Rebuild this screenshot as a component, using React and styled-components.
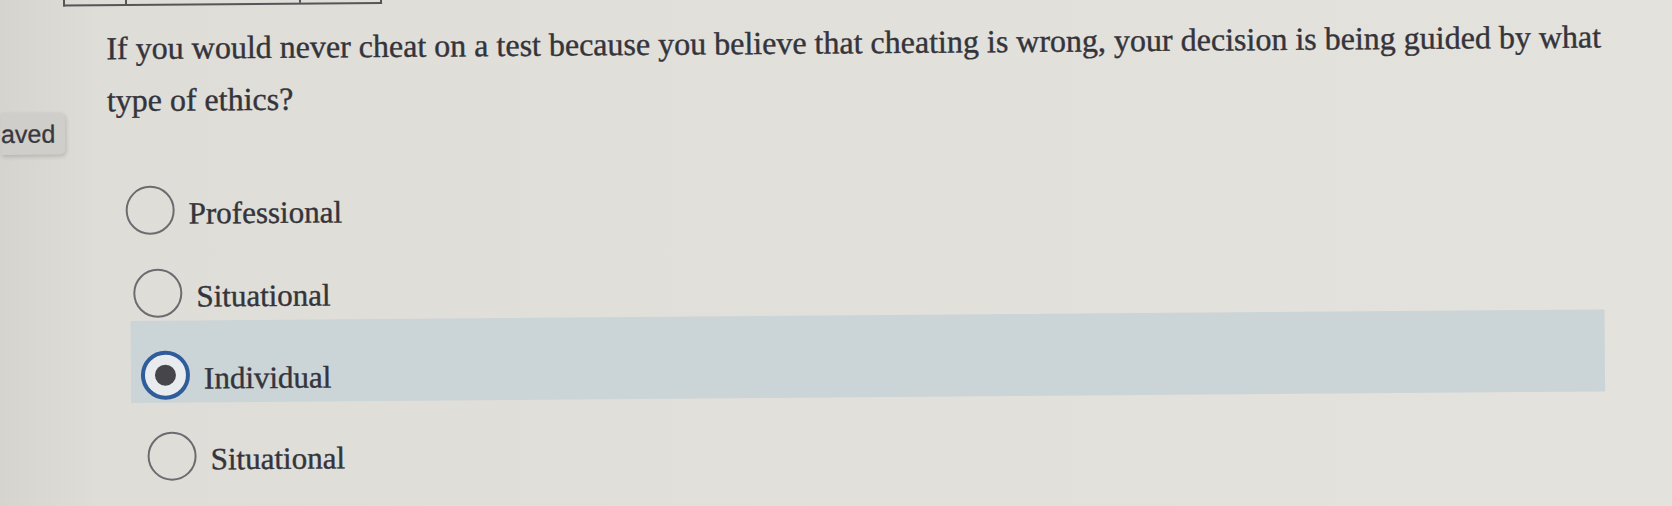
import styled, { createGlobalStyle } from "styled-components";

const GlobalStyle = createGlobalStyle`
  html, body {
    margin: 0;
    padding: 0;
  }
  body {
    background: linear-gradient(90deg, #d6d4cf 0%, #dfddd8 6%, #e2e0db 50%, #e4e2dd 100%);
    overflow: hidden;
  }
`;

const options = [
  { label: "Professional", indent: 18 },
  { label: "Situational", indent: 25 },
  { label: "Individual", indent: 32, selected: true },
  { label: "Situational", indent: 38 },
];

export default function App() {
  return (
    <Page>
      <GlobalStyle />
      <Tilt>
        <Tabs>
          <Tab $w={60} />
          <Tab $w={172} />
          <Tab $w={79} $last />
        </Tabs>
        <Body>
          <Side>
            <SavedBadge>aved</SavedBadge>
          </Side>
          <Content>
            <Question>
              If you would never cheat on a test because you believe that
              cheating is wrong, your decision is being guided by what type of
              ethics?
            </Question>
            <Options>
              {options.map((o, i) => (
                <Option key={i} $selected={o.selected} $indent={o.indent}>
                  <Radio $checked={o.selected}>{o.selected && <Dot />}</Radio>
                  <Label>{o.label}</Label>
                </Option>
              ))}
            </Options>
          </Content>
        </Body>
      </Tilt>
    </Page>
  );
}

const Page = styled.div`
  width: 1672px;
  height: 506px;
  overflow: hidden;
`;

const Tilt = styled.div`
  transform: rotate(-0.45deg);
  transform-origin: 0 0;
`;

/* bottom edge of the table cut off at the top of the photo */
const Tabs = styled.div`
  display: flex;
  margin-left: 63px;
  height: 5px;
  border: 2px solid #55555a;
  border-top: none;
  width: max-content;
`;

const Tab = styled.div`
  width: ${(p) => p.$w}px;
  border-right: ${(p) => (p.$last ? "none" : "2px solid #55555a")};
`;

const Body = styled.div`
  display: grid;
  grid-template-columns: 106px 1fr;
`;

const Side = styled.div`
  padding-top: 106px;
`;

const SavedBadge = styled.div`
  width: 64px;
  height: 42px;
  box-sizing: border-box;
  padding-right: 14px;
  text-align: right;
  background: #cfceca;
  border-radius: 0 5px 5px 0;
  box-shadow: 1px 2px 4px rgba(0, 0, 0, 0.16);
  font-family: "Liberation Sans", Arial, sans-serif;
  font-size: 25px;
  line-height: 42px;
  color: #38383e;
  -webkit-text-stroke: 0.3px #38383e;
`;

const Content = styled.div`
  padding-top: 16px;
`;

const Question = styled.p`
  margin: 0;
  width: 1530px;
  font-family: "Liberation Serif", "Times New Roman", serif;
  font-size: 32px;
  line-height: 52px;
  color: #34343b;
  -webkit-text-stroke: 0.4px #34343b;
`;

const Options = styled.div`
  display: flex;
  flex-direction: column;
  margin-top: 43px;
`;

const Option = styled.div`
  display: flex;
  align-items: center;
  gap: 14px;
  padding: 17px 0 17px ${(p) => p.$indent}px;
  ${(p) =>
    p.$selected &&
    `
    margin: -14px 0 12px 22px;
    padding: 30px 0 3px ${p.$indent - 22}px;
    width: 1474px;
    box-sizing: border-box;
    background: #cbd4d6;
  `}
`;

const Radio = styled.div`
  flex: none;
  width: 49px;
  height: 49px;
  box-sizing: border-box;
  border-radius: 50%;
  display: flex;
  align-items: center;
  justify-content: center;
  border: ${(p) => (p.$checked ? "4px solid #2f5c9a" : "2px solid #6c6c70")};
  background: ${(p) => (p.$checked ? "#e8ecee" : "transparent")};
`;

const Dot = styled.div`
  width: 21px;
  height: 21px;
  border-radius: 50%;
  background: #46464a;
`;

const Label = styled.span`
  padding-top: 5px;
  font-family: "Liberation Serif", "Times New Roman", serif;
  font-size: 31px;
  line-height: 1;
  color: #34343b;
  -webkit-text-stroke: 0.4px #34343b;
`;
